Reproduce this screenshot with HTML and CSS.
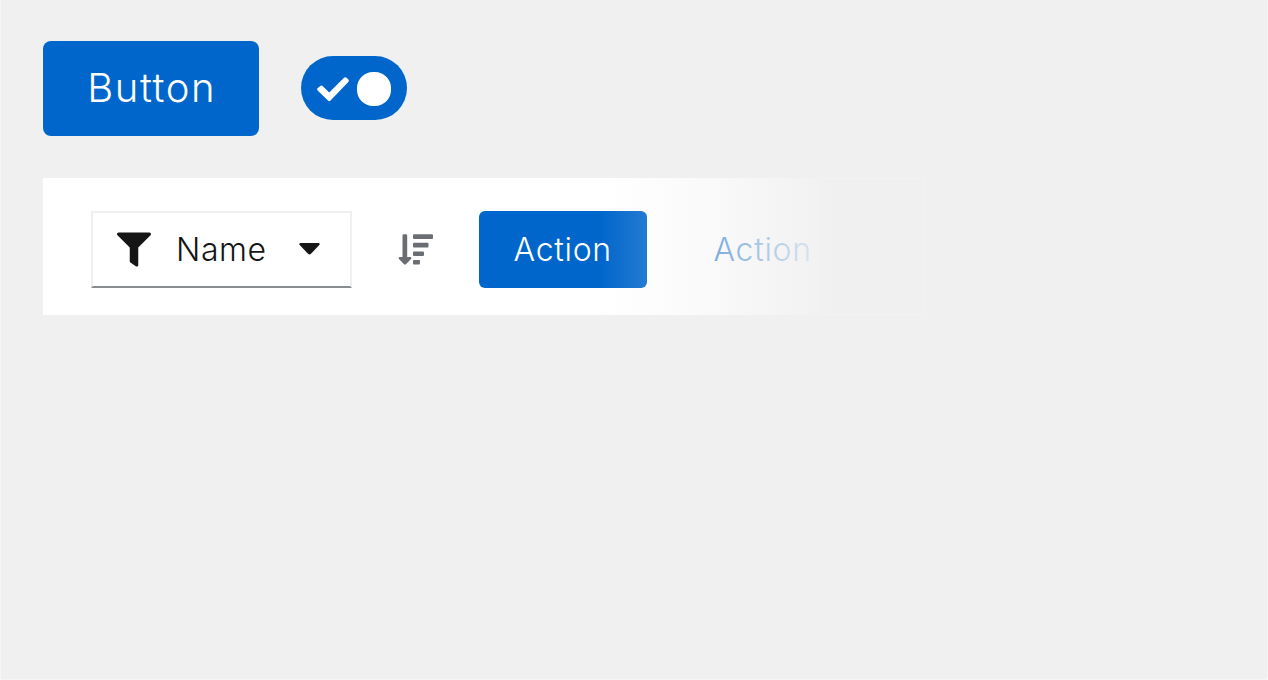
FILE: index.html
```html
<!DOCTYPE html>
<html lang="en">
<head>
<meta charset="utf-8">
<title>Components</title>
<link rel="stylesheet" href="styles.css">
</head>
<body>
<main class="canvas">
  <div class="controls">
    <button class="btn btn-large"><span class="btn-large-text">Button</span></button>
    <div class="switch" role="switch" aria-checked="true">
      <svg class="switch-check" viewBox="0 0 32 25"><path d="M.6 13.4Q-.4 12.3.6 11.2L3.2 8.9Q4.5 8 5.6 9L12.2 15.4 27 .8Q28.4-.3 29.6.8L31.4 2.6Q32.3 3.8 31.3 4.9L13.5 23.6Q12.2 24.8 11 23.6z"/></svg>
      <span class="switch-knob"></span>
    </div>
  </div>
  <div class="toolbar">
    <div class="select">
      <svg class="icon-filter" viewBox="0 0 512 512"><path d="M487.976 0H24.028C2.71 0-8.047 25.866 7.058 40.971L192 225.941V432c0 7.831 3.821 15.17 10.237 19.662l80 55.98C298.02 518.69 320 507.493 320 487.98V225.941l184.947-184.97C520.021 25.896 509.338 0 487.976 0z"/></svg>
      <span class="select-text">Name</span>
      <svg class="icon-caret" viewBox="0 0 21 12"><path d="M1.4 0H19.6Q21.5.5 20.3 2L12 10.8Q10.5 12 9 10.8L.7 2Q-.5.5 1.4 0z"/></svg>
    </div>
    <svg class="icon-sort" viewBox="0 0 36 31"><path d="M4.5 1.5Q4.5 .3 5.7 .3H8Q9.2 .3 9.2 1.5V23H12.5Q14 23.5 13 25L8 30.2Q7 31 6 30.2L1 25Q0 23.5 1.5 23H4.5z"/><rect x="15" y=".3" width="20" height="4.6" rx="1"/><rect x="15" y="8.8" width="15.5" height="4.6" rx="1"/><rect x="15" y="17.4" width="11" height="4.6" rx="1"/><rect x="15" y="26" width="7" height="4.6" rx="1"/></svg>
    <button class="btn btn-action"><span class="action-text">Action</span></button>
    <a class="link action-text">Action</a>
    <div class="toolbar-fade"></div>
  </div>
</main>
</body>
</html>
```
FILE: styles.css
```css
* { box-sizing: border-box; }
body { margin: 0; background: #f0f0f0; font-family: Inter, sans-serif; font-weight: 300; color: #151515; }
.canvas { height: 680px; padding: 40px 42px; border: solid #f6f6f6; border-width: 0 1px 1px; padding-left: 41.5px; display: flex; flex-direction: column; align-items: flex-start; gap: 42px; }
.controls { display: flex; align-items: center; gap: 42px; height: 96px; }
.btn { display: flex; align-items: center; justify-content: center; border: 0; padding: 0; background: #06c; color: #fff; font-family: inherit; font-weight: 300; white-space: nowrap; }
.btn-large { width: 216.5px; height: 95px; border-radius: 8px; font-size: 40px; padding-bottom: 2px; }
.btn-large-text { letter-spacing: 1.6px; margin-right: -2px; }
.switch { display: flex; align-items: center; width: 106px; height: 64px; border-radius: 32px; background: #06c; padding-left: 16px; gap: 8px; }
.switch-check { width: 32px; height: 25px; fill: #fff; margin-top: 2px; }
.switch-knob { width: 34px; height: 34px; border-radius: 16px; background: #fff; margin-top: 2px; }
.toolbar { position: relative; display: flex; align-items: center; width: 882px; height: 137px; padding: 5px 0 0 48.5px; background: #fff; }
.select { display: flex; align-items: center; width: 261px; height: 77px; border: 2px solid #f0f0f0; border-bottom-color: #8a8d90; padding-left: 24px; }
.icon-filter { width: 34px; height: 35px; fill: #151515; flex: none; }
.select-text { width: 148px; flex: none; padding-left: 25px; font-size: 32px; letter-spacing: .6px; }
.icon-caret { width: 21px; height: 12px; fill: #151515; }
.icon-sort { width: 36px; height: 31px; margin: 0 45px 0 46px; fill: #6a6e73; }
.btn-action { width: 167.5px; height: 77px; border-radius: 6px; }
.action-text { font-size: 32px; letter-spacing: .7px; }
.link { color: #06c; opacity: .8; margin-left: 67px; }
.toolbar-fade { position: absolute; inset: 0 0 0 557px; background: linear-gradient(90deg, rgba(240,240,240,0) 0, rgba(240,240,240,.16) 50px, rgba(240,240,240,.38) 115px, rgba(240,240,240,.65) 165px, rgba(240,240,240,.88) 212px, #f0f0f0 228px); }
.toolbar::after { content: ""; position: absolute; inset: 0 0 0 780px; border: solid #f3f3f3; border-width: 1px 1px 1px 0; }
```
